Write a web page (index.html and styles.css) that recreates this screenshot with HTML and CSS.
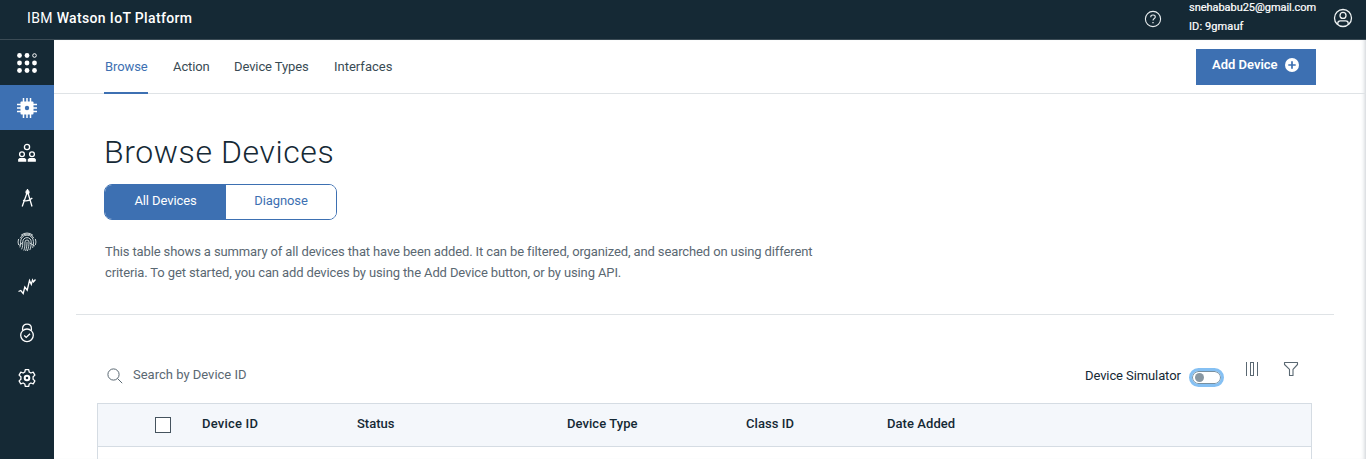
FILE: index.html
```html
<!DOCTYPE html>
<html lang="en">
<head>
<meta charset="utf-8">
<title>IBM Watson IoT Platform</title>
<link rel="stylesheet" href="styles.css">
</head>
<body>
<header class="topbar">
  <div class="brand"><span class="brand-ibm">IBM</span> Watson IoT Platform</div>
  <svg class="help" width="18" height="18" viewBox="0 0 18 18" fill="none" stroke="#e8edef" stroke-width="1.1"><circle cx="9" cy="9" r="7.6"/><path d="M6.8 7.2V6.8C6.8 5.7 7.7 5 9 5s2.3.8 2.3 1.9c0 1.6-2.3 1.6-2.3 3.5"/><path d="M9 12v1.3" stroke-width="1.3"/></svg>
  <div class="account"><div class="mail">snehababu25@gmail.com</div><div class="org">ID: 9gmauf</div></div>
  <svg class="user" width="20" height="20" viewBox="0 0 20 20" fill="none" stroke="#eef2f3" stroke-width="1.3"><circle cx="10" cy="10" r="8.5"/><circle cx="10" cy="7.4" r="3"/><path d="M4.8 16.4v-1.1c0-1.5 1-2.5 2.5-2.5h5.4c1.500 0 2.500 1 2.500 2.500v1.100"/></svg>
</header>
<div class="shell">
  <nav class="rail">
    <a class="rail-item"><svg width="22" height="22" viewBox="0 0 22 22" fill="#fff"><circle cx="3.500" cy="3.500" r="2.400"/><circle cx="11" cy="3.500" r="2.400"/><circle cx="18.500" cy="3.500" r="1.800" fill="none" stroke="#fff"/><circle cx="3.500" cy="11" r="2.400"/><circle cx="11" cy="11" r="2.400"/><circle cx="18.500" cy="11" r="2.400"/><circle cx="3.500" cy="18.500" r="2.400"/><circle cx="11" cy="18.500" r="2.400"/><circle cx="18.500" cy="18.500" r="2.400"/></svg></a>
    <a class="rail-item active"><svg width="22" height="22" viewBox="0 0 22 22"><path d="M7.500 1v20M11 1v20M14.500 1v20M1 7.500h20M1 11h20M1 14.500h20" stroke="#fff" stroke-width="1.500"/><rect x="4.500" y="4.500" width="13" height="13" rx="1" fill="#fff"/><circle cx="11" cy="11" r="2.200" fill="#3d70b2"/></svg></a>
    <a class="rail-item"><svg width="20" height="20" viewBox="0 0 20 20" fill="none" stroke="#fff" stroke-width="1.300"><circle cx="10" cy="4" r="2.600"/><circle cx="5" cy="11.200" r="2.400"/><circle cx="15" cy="11.200" r="2.400"/><path d="M1.800 18v-1.500l1-.8h4.600l1.200.8V18zM11.400 18v-1.500l1.200-.8h4.600l1 .8V18z" fill="#fff"/></svg></a>
    <a class="rail-item"><svg width="20" height="20" viewBox="0 0 20 20" fill="none" stroke="#fff" stroke-width="1.300"><path d="M10.500 1v2M10 5L5.200 18.500M11 5L15 18.500M6 12.300c3 1 6.500.5 9.300-2.300"/><circle cx="10.500" cy="4.200" r="1.500" fill="#fff"/></svg></a>
    <a class="rail-item finger"><svg width="20" height="20" viewBox="0 0 20 20" fill="none" stroke="#dfe5e7" stroke-width=".9"><path d="M4 3.300a9 9 0 0 1 12 0M1.600 7a9 9 0 0 0 0 6M18.400 7a9 9 0 0 1 0 6M2.800 15.400C4 13 3.400 11.500 3.600 9.500a6.400 6.400 0 0 1 12.800 0c.2 2 0 4-.8 6.400M4.600 17.300c1.300-2.500 1-5 1.200-7.500a4.200 4.200 0 0 1 8.400 0c.1 3-.3 5.500-1.400 8.300M6.800 18.500c1.300-3 1-6 1.200-8.500a2 2 0 0 1 4 0c0 3-.4 6-1.600 9M10 9.800c0 3-.3 5.500-1.300 9.200M3.200 6.200C6 .7 14 .7 16.800 6.200M2 13.500l4-3M17.800 14l-5-3"/></svg></a>
    <a class="rail-item chart"><svg width="20" height="20" viewBox="0 0 20 20" fill="none" stroke="#fff" stroke-width="1.300"><path d="M1.500 14.500l2.300-1 2.400 3 1.600-6.500 2.400 3.200L12.500 3.500l1.800 3.800L15.500 3l1 1.800 2-2.300"/></svg></a>
    <a class="rail-item lock"><svg width="20" height="20" viewBox="0 0 20 20" fill="none" stroke="#fff" stroke-width="1.300"><circle cx="10" cy="12.300" r="6.300"/><path d="M5.600 7.600V5.400C5.600 2.800 7.500 1.200 10 1.200s4.400 1.600 4.400 4.200v2.200M7.200 12.500l2 1.900 3.800-3.700"/></svg></a>
    <a class="rail-item"><svg width="20" height="20" viewBox="0 0 20 20" fill="none" stroke="#fff" stroke-width="1.300"><path d="M8.300 1.700h3.400l.5 2.300 1.700 1 2.300-.8 1.700 2.900-1.800 1.700v2.400l1.800 1.700-1.700 2.900-2.300-.8-1.700 1-.5 2.300H8.300L7.800 16l-1.700-1-2.300.8-1.700-2.900 1.800-1.700V8.800L2.100 7.100l1.700-2.900 2.300.8 1.700-1z" stroke-linejoin="round"/><circle cx="10" cy="10" r="2.300" stroke-width="2"/></svg></a>
  </nav>
  <main class="main">
    <div class="tabs">
      <a class="tab selected">Browse</a><a class="tab action">Action</a><a class="tab types">Device Types</a><a class="tab interfaces">Interfaces</a>
      <button class="add"><span>Add Device</span><svg width="14" height="14" viewBox="0 0 14 14"><circle cx="7" cy="7" r="7" fill="#fff"/><path d="M7 3.300v7.400M3.300 7h7.400" stroke="#3d70b2" stroke-width="1.700"/></svg></button>
    </div>
    <section class="intro">
      <h1 class="title">Browse Devices</h1>
      <div class="switcher"><button class="seg on"><span>All Devices</span></button><button class="seg"><span class="diagnose">Diagnose</span></button></div>
      <p class="summary">This table shows a summary of all devices that have been added. It can be filtered, organized, and searched on using different<br>criteria. To get started, you can add devices by using the Add Device button, or by using API.</p>
    </section>
    <section class="listing">
      <div class="toolbar">
        <svg class="magnifier" width="16" height="16" viewBox="0 0 16 16" fill="none" stroke="#5a6872" stroke-width="1"><circle cx="6.500" cy="6.500" r="5.600"/><path d="M10.500 10.500l4.700 4.700"/></svg>
        <span class="search">Search by Device ID</span>
        <span class="sim">Device Simulator</span>
        <span class="toggle"><i class="knob"></i></span>
        <svg class="columns" width="14" height="16" viewBox="0 0 14 16" fill="none" stroke="#5a6872"><path d="M1.500 1v14M12.500 1v14"/><rect x="5.500" y="1.500" width="3" height="13"/></svg>
        <svg class="filter" width="16" height="16" viewBox="0 0 16 16" fill="none" stroke="#5a6872" stroke-width="1.100"><path d="M1.500 1.500h13v2L10 8.300v6.200H6.500V8.300L1.500 3.500z" stroke-linejoin="round"/></svg>
      </div>
      <div class="table">
        <div class="thead"><span class="cell"><i class="checkbox"></i></span><span class="th id">Device ID</span><span class="th status">Status</span><span class="th type">Device Type</span><span class="th class">Class ID</span><span class="th date">Date Added</span></div>
      </div>
    </section>
  </main>
</div>
</body>
</html>
```
FILE: styles.css
```css
* { box-sizing: border-box; }
body {
  margin: 0;
  height: 459px;
  overflow: hidden;
  background: #fff;
  color: #152935;
  font: 13px/20px Roboto, "Liberation Sans", sans-serif;
  white-space: nowrap;
}
button { margin: 0; padding: 0; border: 0; font: inherit; white-space: nowrap; }
svg { display: block; flex: none; }

.topbar { display: flex; height: 40px; padding-left: 27px; background: #152935; border-bottom: 1px solid #3b4b55; color: #fff; }
.brand { width: 1117px; padding-top: 8px; font-size: 14px; font-weight: 500; letter-spacing: 0.35px; }
.brand-ibm { font-weight: 400; }
.help { margin-top: 10px; }
.account { width: 171px; padding-left: 27px; font-size: 11px; line-height: 19px; -webkit-text-stroke: 0.2px; }
.mail { margin-top: -2px; letter-spacing: -0.04px; }
.org { letter-spacing: 0.1px; }
.user { margin-top: 8px; }

.shell { display: flex; height: 419px; }
.rail { width: 54px; background: #152935; flex: none; }
.rail-item { display: flex; height: 45px; align-items: center; justify-content: center; }
.rail-item.active { background: #3d70b2; }
.rail-item.chart { padding-bottom: 2px; }
.rail-item.finger { padding-bottom: 1px; }
.rail-item.lock { padding-right: 1px; }

.main { flex: 1; min-width: 0; box-shadow: inset -4px 0 4px -3px #c8cdd2; }
.tabs { display: flex; height: 54px; padding-left: 50px; border-bottom: 1px solid #dfe3e6; }
.tab { height: 54px; padding-top: 17px; margin-right: 25px; color: #394b54; font-weight: 400; letter-spacing: -0.1px; }
.tab.selected { width: 44px; border-bottom: 2px solid #3d70b2; color: #3d70b2; padding-left: 1px; }
.tab.action { width: 36px; }
.tab.types { width: 75px; }
.tab.interfaces { width: 59px; letter-spacing: 0; }
.add { display: flex; width: 120px; height: 36px; margin: 9px 50px 0 auto; padding: 0 0 4px 16px; align-items: center; gap: 7px; background: #3d70b2; color: #fff; font-weight: 600; }

.intro { height: 221px; margin: 0 32px 0 22px; padding: 34px 0 0 28px; border-bottom: 1px solid #dfe3e6; }
.title { margin: 0; height: 56px; font-size: 32px; line-height: 48px; font-weight: 300; letter-spacing: 0.6px; }
.switcher { display: flex; width: 233px; height: 36px; border: 1px solid #3d70b2; border-radius: 8px; overflow: hidden; }
.seg { width: 110px; padding-bottom: 3px; background: #fff; color: #3d70b2; letter-spacing: -0.1px; }
.seg.on { width: 121px; background: #3d70b2; color: #fff; }
.summary { margin: 21px 0 0 1px; line-height: 21px; color: #5a6872; letter-spacing: -0.122px; }

.listing { padding: 0 54px 0 43px; }
.toolbar { display: flex; height: 88px; padding-left: 10px; }
.magnifier { margin-top: 53px; }
.search { width: 952px; margin: 50px 0 0 10px; color: #5a6872; }
.sim { width: 104px; margin-top: 51px; letter-spacing: -0.1px; }
.toggle { width: 35px; height: 19px; margin-top: 53px; padding: 4px 5px; border: 3px solid #85c0f3; border-radius: 10px; box-shadow: inset 0 0 0 1px #7890a0; }
.knob { display: block; width: 9px; height: 9px; margin: -2px 0 0 -2px; border-radius: 50%; background: #8897a2; }
.columns { margin: 46px 0 0 21px; }
.filter { margin: 46px 0 0 24px; }
.table { height: 56px; border: 1px solid #d5dce3; border-bottom: 0; }
.thead { display: grid; grid-template-columns: 104px 155px 210px 179px 141px 1fr; height: 43px; padding-top: 10px; background: #f4f7fb; border-bottom: 1px solid #d5dce3; font-weight: 500; }
.th.id { letter-spacing: 0.2px; }
.th.type, .th.class, .th.date { letter-spacing: 0.06px; }
.checkbox { display: block; width: 16px; height: 16px; margin: 3px 0 0 57px; border: 1px solid #45535e; background: #fff; }
```
